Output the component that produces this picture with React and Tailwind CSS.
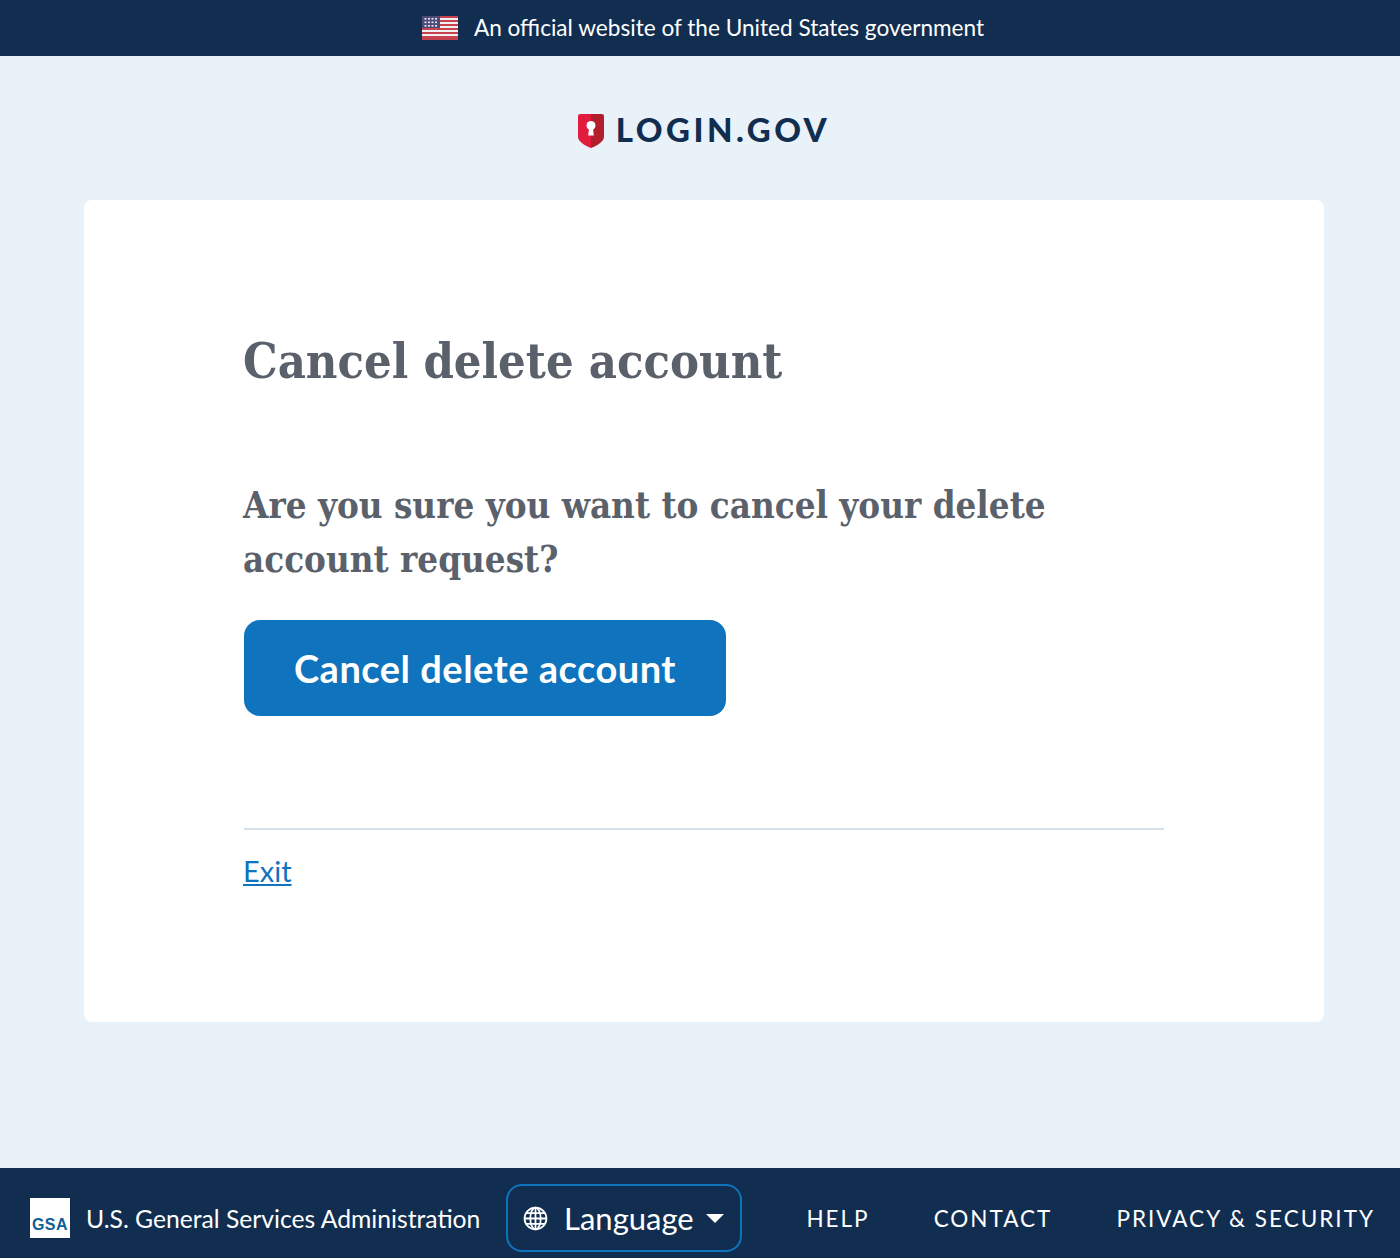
const sans = "font-['Lato','Noto_Sans',sans-serif]";
const serif = "font-['DejaVu_Serif_Condensed','DejaVu_Serif',serif]";

const FlagIcon = () => (
  <svg width="36" height="24" viewBox="0 0 36 24" className="shrink-0">
    <rect width="36" height="24" fill="#f0f0f0" />
    {[0, 4, 8, 12, 16, 20].map((y) => (
      <rect key={y} x="0" y={y} width="36" height="2" fill="#c8414f" />
    ))}
    <rect x="0" y="22" width="36" height="2" fill="#c8414f" />
    <rect width="18" height="12" fill="#4b4a78" />
    {[2, 5.5, 9].map((y) =>
      [2.5, 6, 9.5, 13].map((x) => <rect key={x + "-" + y} x={x} y={y} width="2" height="1.6" fill="#e8e8f0" />)
    )}
  </svg>
);

const ShieldIcon = () => (
  <svg width="28" height="36" viewBox="0 0 28 36" className="mt-[2px] shrink-0">
    <path d="M14 1H3.500C1.800 1 1 1.800 1 3.500V24C1 28 7 32.500 14 35Z" fill="#e21c3d" />
    <path d="M14 1H24.500C26.200 1 27 1.800 27 3.500V24C27 28 21 32.500 14 35Z" fill="#b31e2c" />
    <circle cx="14" cy="12.500" r="4.500" fill="#fff" />
    <path d="M12.200 14H15.800L16.800 22.500H11.200Z" fill="#fff" />
  </svg>
);

const GlobeIcon = () => (
  <svg width="25" height="25" viewBox="0 0 24 24" fill="none" stroke="#fff" strokeWidth="1.700" className="shrink-0">
    <circle cx="12" cy="12" r="10.500" />
    <ellipse cx="12" cy="12" rx="5" ry="10.500" />
    <path d="M12 1.500V22.500M1.500 12H22.500M3 6.800H21M3 17.200H21" />
  </svg>
);

const GsaLogo = () => (
  <div className="flex h-10 w-10 shrink-0 items-end justify-center bg-white pb-[3px]">
    <span className="font-['Liberation_Sans',sans-serif] text-[16px] leading-5 font-bold tracking-[0.500px] text-[#0f5f96]">GSA</span>
  </div>
);

const FooterLink = ({ children, className }) => (
  <a className={`mt-[2px] text-[22.500px] leading-none tracking-[2px] text-white ${className}`}>{children}</a>
);

export default function App() {
  return (
    <div className={`flex min-h-[1258px] flex-col bg-[#e9f1f9] ${sans}`}>
      <div className="flex h-14 items-center justify-center gap-4 bg-[#112e51] pl-[6px] text-[22.600px] text-white">
        <FlagIcon />
        <span>An official website of the United States government</span>
      </div>

      <div className="flex h-[144px] items-center justify-center gap-[11px] pt-[3px] pl-[7px]">
        <ShieldIcon />
        <span className="text-[33px] leading-none font-black tracking-[3.500px] text-[#112e51]">LOGIN.GOV</span>
      </div>

      <main className="mr-[76px] ml-[84px] h-[822px] rounded-lg bg-white px-40 pt-[128px]">
        <h1 className={`-ml-px text-[48.400px] leading-[66px] font-bold text-[#5b616b] ${serif}`}>
          Cancel delete account
        </h1>
        <p className={`mt-[85px] -ml-px text-[36.400px] leading-[54px] font-bold text-[#5b616b] ${serif}`}>
          Are you sure you want to cancel your delete account request?
        </p>
        <button className="mt-[33px] flex h-24 w-[482px] items-center justify-center rounded-2xl bg-[#0f73bd] text-[38px] font-bold tracking-[0.500px] text-white">
          Cancel delete account
        </button>
        <div className="mt-28 border-t-2 border-[#d6e2ec] pt-[21px]">
          <a className="-ml-px inline-block text-[29px] leading-10 text-[#0f73bd] underline">Exit</a>
        </div>
      </main>

      <footer className="mt-auto flex h-[90px] items-center bg-[#112e51] pt-[10px] pl-[30px] text-white">
        <GsaLogo />
        <span className="mt-[2px] ml-4 text-[24.700px]">U.S. General Services Administration</span>
        <button className="ml-[26px] flex h-[68px] w-[236px] items-center justify-center gap-[16px] rounded-2xl border-2 border-[#0f73bd] pr-[2px] text-[31px]">
          <GlobeIcon />
          <span>Language</span>
          <span className="-ml-1 h-0 w-0 border-x-[9px] border-t-[9px] border-x-transparent border-t-white" />
        </button>
        <FooterLink className="ml-16">HELP</FooterLink>
        <FooterLink className="ml-16">CONTACT</FooterLink>
        <FooterLink className="ml-16">PRIVACY &amp; SECURITY</FooterLink>
      </footer>
    </div>
  );
}
